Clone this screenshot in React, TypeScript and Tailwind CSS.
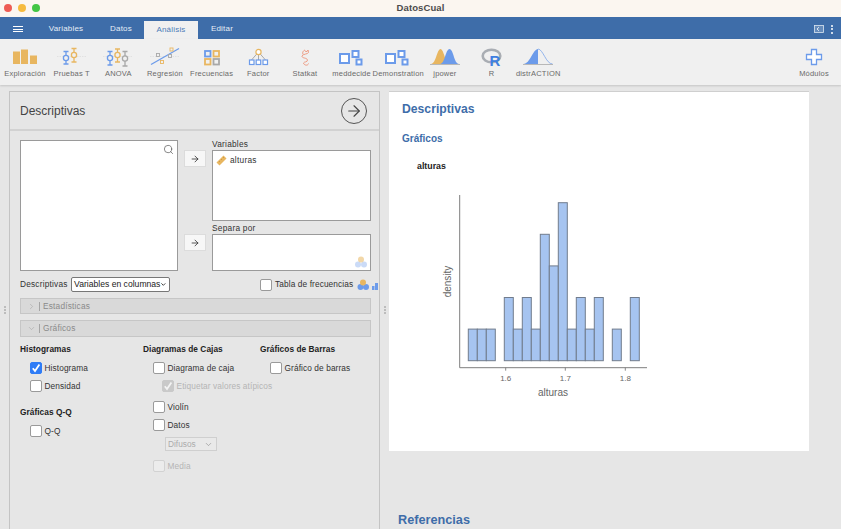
import { ChevronDown, ChevronRight, Search, ArrowRight } from "lucide-react";

const BLUE = "#6c9bea";
const ORANGE = "#e8b660";
const GRAY = "#a8a8a8";

function Whisker({ x, y1, y2, cy, color }: { x: number; y1: number; y2: number; cy: number; color: string }) {
  return (
    <g stroke={color} strokeWidth="1.3" fill="#f0f0f0">
      <path d={`M${x} ${y1}V${y2}M${x - 2.5} ${y1}h5M${x - 2.5} ${y2}h5`} />
      <circle cx={x} cy={cy} r="2.6" />
    </g>
  );
}

function Squares() {
  return (
    <g fill="#fff" stroke={BLUE} strokeWidth="2">
      <rect x="6" y="7" width="9" height="9" />
      <rect x="18.5" y="4" width="6" height="6" />
      <rect x="22.5" y="12.5" width="5" height="5" />
    </g>
  );
}

const tools = [
  {
    label: "Exploración",
    icon: (
      <g fill={ORANGE}>
        <rect x="6" y="4.5" width="7" height="12.5" />
        <rect x="14" y="2.5" width="7" height="14.5" />
        <rect x="23" y="8.5" width="7" height="8.5" />
      </g>
    ),
  },
  {
    label: "Pruebas T",
    icon: (
      <>
        <path d="M3 9.5H32" stroke="#ddd" strokeWidth="0.8" strokeDasharray="1.5 1" />
        <Whisker x={12} y1={4.5} y2={17} cy={11} color={BLUE} />
        <Whisker x={20} y1={1.5} y2={15} cy={8} color={ORANGE} />
      </>
    ),
  },
  {
    label: "ANOVA",
    icon: (
      <>
        <path d="M3 9.5H33" stroke="#ddd" strokeWidth="0.8" strokeDasharray="1.5 1" />
        <Whisker x={10} y1={4.5} y2={18} cy={11} color={BLUE} />
        <Whisker x={17.5} y1={2} y2={15} cy={8} color={ORANGE} />
        <Whisker x={25} y1={4.5} y2={19} cy={11.5} color={GRAY} />
      </>
    ),
  },
  {
    label: "Regresión",
    icon: (
      <>
        <path d="M3 9.5H33" stroke="#ddd" strokeWidth="0.8" strokeDasharray="1.5 1" />
        <path d="M4 17.5L32 1.5" stroke={BLUE} strokeWidth="1.2" />
        <g fill="#f0f0f0" strokeWidth="0.9">
          <rect x="9.5" y="6.5" width="3" height="3" stroke={GRAY} />
          <rect x="23" y="1" width="3" height="3" stroke={ORANGE} />
          <rect x="21.5" y="7.5" width="3" height="3" stroke={GRAY} />
          <rect x="13.5" y="13.5" width="3" height="3" stroke={ORANGE} />
        </g>
      </>
    ),
  },
  {
    label: "Frecuencias",
    icon: (
      <g fill="#f0f0f0" strokeWidth="1.8">
        <rect x="11" y="4" width="5.5" height="5.5" stroke={BLUE} />
        <rect x="19.5" y="4" width="5.5" height="5.5" stroke={ORANGE} />
        <rect x="11" y="12" width="5.5" height="5.5" stroke={ORANGE} />
        <rect x="19.5" y="12" width="5.5" height="5.5" stroke={GRAY} />
      </g>
    ),
  },
  {
    label: "Factor",
    icon: (
      <>
        <path d="M18.5 5L11.5 13M18.5 5V13M18.5 5L25.5 13" stroke="#8a8a8a" strokeWidth="0.7" />
        <circle cx="18.5" cy="5" r="2.6" fill="#fff" stroke={ORANGE} strokeWidth="1.2" />
        <g fill="#fff" stroke={BLUE} strokeWidth="1.2">
          <rect x="9.5" y="13" width="4.5" height="4.5" />
          <rect x="16.2" y="13" width="4.5" height="4.5" />
          <rect x="23" y="13" width="4.5" height="4.5" />
        </g>
      </>
    ),
  },
  {
    label: "Statkat",
    icon: (
      <path
        d="M16 7.5C15 5 16.5 4 17.5 3L18.5 4.5L20 4.5L21 3L21.5 5.5C20.5 7.5 16.5 6.5 15 9C14.5 11.5 20 10.5 20.5 13C20.5 15.5 17 14.5 16.5 16C17 18.5 21 19 21.5 16.5"
        fill="none"
        stroke="#ec9378"
        strokeWidth="0.9"
      />
    ),
  },
  { label: "meddecide", icon: <Squares /> },
  { label: "Demonstration", icon: <Squares /> },
  {
    label: "jpower",
    icon: (
      <>
        <path d="M4 17C9 17 10 2 13.5 2C17 2 18 17 23 17Z" fill={ORANGE} />
        <path d="M13 17C18 17 18.5 2 22.5 2C26.5 2 27 17 32 17Z" fill={BLUE} />
        <path d="M3 17.5H33" stroke="#aaa" strokeWidth="0.8" />
      </>
    ),
  },
  {
    label: "R",
    icon: (
      <>
        <ellipse cx="17.5" cy="9" rx="8.8" ry="6.3" fill="none" stroke="#a9adb3" strokeWidth="2.6" />
        <text x="15.5" y="19" fontFamily="'Liberation Sans', sans-serif" fontWeight="700" fontSize="15" fill="#3f7fe0">
          R
        </text>
      </>
    ),
  },
  {
    label: "distrACTION",
    icon: (
      <>
        <path d="M3.5 17C10 17 13 2 18 2V17Z" fill={BLUE} />
        <path d="M18 2C23 2 26 17 32.5 17" fill="none" stroke={BLUE} strokeWidth="0.7" />
        <path d="M3 17.5H33" stroke="#aaa" strokeWidth="0.8" />
      </>
    ),
  },
];

function Tool({ label, icon }: { label: string; icon: React.ReactNode }) {
  return (
    <div className="flex w-[46.67px] shrink-0 flex-col items-center">
      <svg width="36" height="22" viewBox="0 0 36 22" className="shrink-0 overflow-visible">
        {icon}
      </svg>
      <span className="mt-[-1px] text-[7.5px] leading-[12px] tracking-[0.2px] whitespace-nowrap text-[#6a6a6a]">{label}</span>
    </div>
  );
}

function Check({ checked, disabled }: { checked?: boolean; disabled?: boolean }) {
  let cls = "border-[#9a9a9a] bg-white";
  if (checked) cls = "border-[#2f7cf6] bg-[#2f7cf6]";
  if (disabled) cls = checked ? "border-[#c9c9c9] bg-[#c9c9c9]" : "border-[#d2d2d2] bg-[#ececec]";
  return (
    <span className={`flex h-[12px] w-[12px] shrink-0 items-center justify-center rounded-[2px] border ${cls}`}>
      {checked && (
        <svg width="10" height="10" viewBox="0 0 10 10">
          <path d="M1.8 5.2L4 8L8.4 1.6" fill="none" stroke={disabled ? "#f3f3f3" : "#fff"} strokeWidth="1.8" />
        </svg>
      )}
    </span>
  );
}

function Option({ label, checked, disabled, className = "" }: { label: string; checked?: boolean; disabled?: boolean; className?: string }) {
  return (
    <div className={`flex h-[12px] items-center gap-[2.5px] ${className}`}>
      <Check checked={checked} disabled={disabled} />
      <span className={`text-[8.3px] tracking-[0.1px] whitespace-nowrap ${disabled ? "text-[#b5b5b5]" : "text-[#333]"}`}>{label}</span>
    </div>
  );
}

function Heading({ children, className = "" }: { children: React.ReactNode; className?: string }) {
  return <div className={`text-[8.3px] leading-[12px] font-bold tracking-[0.05px] whitespace-nowrap text-[#222] ${className}`}>{children}</div>;
}

function SectionBar({ label, open, className = "" }: { label: string; open?: boolean; className?: string }) {
  return (
    <div className={`flex h-[16px] w-[351px] items-center border border-[#c6c6c6] bg-[#d9d9d9] pl-[6px] text-[8.3px] tracking-[0.2px] text-[#8a8a8a] ${className}`}>
      {open ? <ChevronDown size={9} strokeWidth={1} /> : <ChevronRight size={9} strokeWidth={1} />}
      <span className="mr-[3px] ml-[3px] h-[9px] w-px bg-[#a5a5a5]" />
      {label}
    </div>
  );
}

function AssignButton({ className = "" }: { className?: string }) {
  return (
    <div className={`flex h-[17px] w-[22px] items-center justify-center border border-[#dcdcdc] bg-[#f7f7f7] ${className}`}>
      <ArrowRight size={10} strokeWidth={1.8} className="text-[#222]" />
    </div>
  );
}

function NominalIcon({ className = "" }: { className?: string }) {
  return (
    <svg width="14" height="12" viewBox="0 0 14 12" className={className}>
      <g fill={BLUE} opacity="0.35">
        <circle cx="4" cy="8.5" r="3" />
        <circle cx="10" cy="8.5" r="3" />
      </g>
      <circle cx="7" cy="3.5" r="3" fill={ORANGE} opacity="0.55" />
    </svg>
  );
}

function Splitter() {
  return (
    <div className="flex flex-col items-center gap-[1px]">
      <span className="h-[2px] w-[2px] bg-[#bcbcbc]" />
      <span className="h-[2px] w-[2px] bg-[#bcbcbc]" />
      <span className="h-[2px] w-[2px] bg-[#bcbcbc]" />
    </div>
  );
}

const bins = [1, 1, 1, 0, 2, 1, 2, 1, 4, 3, 5, 1, 2, 1, 2, 0, 1, 0, 2];

function Histogram() {
  return (
    <svg width="220" height="212" viewBox="0 0 220 212" className="mt-[19px] ml-[28px] block" fontFamily="'Liberation Sans', sans-serif">
      {bins.map((n, i) =>
        n === 0 ? null : (
          <rect key={i} x={38.3 + i * 9} y={170.7 - n * 31.6} width="9" height={n * 31.6} fill="#a6c4f0" stroke="#717c8d" strokeWidth="1" />
        ),
      )}
      <path d="M29.7 5V177.7H217" fill="none" stroke="#6f6f6f" strokeWidth="0.9" />
      <path d="M75.7 177.7v3M135.3 177.7v3M195.3 177.7v3" stroke="#6f6f6f" strokeWidth="0.8" />
      <g fontSize="8" fill="#666" textAnchor="middle">
        <text x="75.7" y="191">1.6</text>
        <text x="135.3" y="191">1.7</text>
        <text x="195.3" y="191">1.8</text>
      </g>
      <text x="123" y="206" fontSize="10" fill="#666" textAnchor="middle">alturas</text>
      <text x="0" y="0" fontSize="10" fill="#666" textAnchor="middle" transform="translate(20.5 91.5) rotate(-90)">density</text>
    </svg>
  );
}

export default function App() {
  return (
    <div className="flex h-[529px] w-[841px] flex-col overflow-hidden bg-[#e6e6e6] font-['Liberation_Sans',Arial,sans-serif]">
      {/* title bar */}
      <div className="relative flex h-[17px] shrink-0 items-center justify-center bg-[#fbf6f0]">
        <div className="absolute top-[3.5px] left-[3.5px] flex gap-[6px]">
          <span className="h-[8px] w-[8px] rounded-full bg-[#ee5c54]" />
          <span className="h-[8px] w-[8px] rounded-full bg-[#f6bb3e]" />
          <span className="h-[8px] w-[8px] rounded-full bg-[#43c645]" />
        </div>
        <span className="text-[9.5px] font-bold tracking-[0.1px] text-[#4b4b4b]">DatosCual</span>
      </div>

      {/* tabs */}
      <div className="flex h-[22px] shrink-0 items-end bg-[#3e6da9] text-[8px] tracking-[0.2px] text-[#e6edf6]">
        <div className="flex h-full w-[34px] items-center justify-center pl-[1px]">
          <div className="flex flex-col gap-[1.5px] pt-[2px]">
            <span className="h-[1px] w-[10px] bg-white" />
            <span className="h-[1px] w-[10px] bg-white" />
            <span className="h-[1px] w-[10px] bg-white" />
          </div>
        </div>
        <div className="flex h-full w-[64px] items-center justify-center pt-[2px]">Variables</div>
        <div className="flex h-full w-[46px] items-center justify-center pt-[2px]">Datos</div>
        <div className="flex h-[18px] w-[54px] items-center justify-center bg-[#f0f0f0] text-[#4d7db8]">Análisis</div>
        <div className="flex h-full w-[48px] items-center justify-center pt-[2px]">Editar</div>
        <div className="flex h-full flex-1 items-center justify-end gap-[7px] pt-[2px] pr-[8px]">
          <svg width="10" height="8" viewBox="0 0 10 8">
            <rect x="0.5" y="0.5" width="9" height="7" fill="none" stroke="#dce6f2" strokeWidth="0.8" />
            <path d="M0.5 0.5H9.5V7.5H0.5Z" fill="#dce6f2" opacity="0.25" />
            <path d="M5 2.2L3 4L5 5.8" fill="none" stroke="#fff" strokeWidth="0.8" />
          </svg>
          <div className="flex flex-col gap-[1.5px]">
            <span className="h-[2px] w-[2px] rounded-full bg-white" />
            <span className="h-[2px] w-[2px] rounded-full bg-white" />
            <span className="h-[2px] w-[2px] rounded-full bg-white" />
          </div>
        </div>
      </div>

      {/* toolbar */}
      <div className="flex h-[46px] shrink-0 items-start bg-[#f0f0f0] pt-[8px] pl-[1.7px] shadow-[0_1px_2px_rgba(0,0,0,0.15)]">
        {tools.map((t) => (
          <Tool key={t.label} label={t.label} icon={t.icon} />
        ))}
        <div className="ml-auto flex w-[54px] flex-col items-center">
          <svg width="22" height="22" viewBox="0 0 22 22" className="shrink-0">
            <path d="M8.5 2.5H13.5V7.5H18.5V12.5H13.5V17.5H8.5V12.5H3.5V7.5H8.5Z" fill="#fff" stroke={BLUE} strokeWidth="1.3" />
          </svg>
          <span className="mt-[-1px] text-[7.5px] leading-[12px] tracking-[0.2px] text-[#6a6a6a]">Módulos</span>
        </div>
      </div>

      {/* body */}
      <div className="flex min-h-0 flex-1 pt-[6px]">
        <div className="flex w-[9px] shrink-0 items-center justify-center">
          <div className="mt-[-1px]"><Splitter /></div>
        </div>

        {/* options panel */}
        <div className="w-[371px] shrink-0 overflow-hidden border border-b-0 border-[#c4c4c4] bg-[#e6e6e6]">
          <div className="flex h-[39px] items-center justify-between border-b-2 border-[#d2d2d2] pr-[12px] pl-[10px]">
            <span className="text-[12px] text-[#444]">Descriptivas</span>
            <div className="flex h-[26px] w-[26px] items-center justify-center rounded-full border-[1.5px] border-[#555]">
              <ArrowRight size={18} strokeWidth={1.5} className="text-[#444]" />
            </div>
          </div>

          <div className="pt-[9px] pl-[10px]">
            <div className="flex">
              <div className="flex h-[131px] w-[158px] justify-end border border-[#9a9a9a] bg-white pt-[3px] pr-[3px]">
                <Search size={11} strokeWidth={1.5} className="text-[#555]" />
              </div>
              <div className="ml-[6px] w-[22px] pt-[10px]">
                <AssignButton />
                <AssignButton className="mt-[67px]" />
              </div>
              <div className="ml-[6px] w-[159px]">
                <div className="h-[10px] text-[8.3px] leading-[9px] tracking-[0.25px] text-[#333]">Variables</div>
                <div className="flex h-[71px] items-start gap-[3px] border border-[#9a9a9a] bg-white pt-[4px] pl-[3px]">
                  <svg width="11" height="11" viewBox="0 0 11 11" className="shrink-0">
                    <path d="M0.5 7.5L7.5 0.5L10.5 3.5L3.5 10.5Z" fill={ORANGE} />
                    <path d="M3 6L4 7M5 4L6 5M7 2L8 3" stroke="#b98a35" strokeWidth="0.6" />
                  </svg>
                  <span className="text-[8.3px] leading-[10px] tracking-[0.25px] text-[#333]">alturas</span>
                </div>
                <div className="mt-[2px] h-[11px] text-[8.3px] leading-[11px] tracking-[0.25px] text-[#333]">Separa por</div>
                <div className="flex h-[37px] items-end justify-end border border-[#9a9a9a] bg-white pr-[2px] pb-[2px]">
                  <NominalIcon />
                </div>
              </div>
            </div>

            <div className="mt-[6px] flex h-[15px] items-center">
              <span className="shrink-0 text-[8.3px] tracking-[0.2px] text-[#333]">Descriptivas</span>
              <div className="ml-[3.5px] flex h-[15px] w-[99px] shrink-0 items-center justify-between rounded-[2px] border border-[#777] bg-white pr-[2px] pl-[2px] text-[8.6px] whitespace-nowrap text-[#222]">
                Variables en columnas
                <ChevronDown size={9} strokeWidth={3} />
              </div>
              <div className="ml-[90px] flex shrink-0 items-center gap-[3px]">
                <Check />
                <span className="text-[8.3px] tracking-[0.1px] whitespace-nowrap text-[#333]">Tabla de frecuencias</span>
              </div>
              <svg width="22" height="12" viewBox="0 0 22 12" className="ml-[4px] shrink-0">
                <circle cx="3.5" cy="8" r="3" fill={BLUE} />
                <circle cx="9" cy="8" r="3" fill={BLUE} />
                <circle cx="6" cy="3.5" r="3" fill={ORANGE} />
                <path d="M15 7h2.5v4H15ZM18 4h3v7h-3Z" fill={BLUE} />
              </svg>
            </div>

            <SectionBar label="Estadísticas" className="mt-[6px]" />
            <SectionBar label="Gráficos" open className="mt-[6px] h-[17px]" />

            <div className="mt-[6px] grid grid-cols-[123px_117px_1fr]">
              <div>
                <Heading>Histogramas</Heading>
                <Option label="Histograma" checked className="mt-[7px] ml-[10px]" />
                <Option label="Densidad" className="mt-[6px] ml-[10px]" />
                <Heading className="mt-[14px]">Gráficas Q-Q</Heading>
                <Option label="Q-Q" className="mt-[7px] ml-[10px]" />
              </div>
              <div>
                <Heading>Diagramas de Cajas</Heading>
                <Option label="Diagrama de caja" className="mt-[7px] ml-[10px]" />
                <Option label="Etiquetar valores atípicos" checked disabled className="mt-[6px] ml-[19px]" />
                <Option label="Violín" className="mt-[9px] ml-[10px]" />
                <Option label="Datos" className="mt-[6px] ml-[10px]" />
                <div className="mt-[6px] ml-[22px] flex h-[14px] w-[52px] items-center justify-between border border-[#cfcfcf] bg-[#e9e9e9] pr-[3px] pl-[2px] text-[8.3px] text-[#ababab]">
                  Difusos
                  <ChevronDown size={9} strokeWidth={1.6} className="text-[#8a8a8a]" />
                </div>
                <Option label="Media" disabled className="mt-[9px] ml-[10px]" />
              </div>
              <div>
                <Heading>Gráficos de Barras</Heading>
                <Option label="Gráfico de barras" className="mt-[7px] ml-[10px]" />
              </div>
            </div>
          </div>
        </div>

        <div className="flex w-[9px] shrink-0 items-center justify-center">
          <div className="mt-[-1px]"><Splitter /></div>
        </div>

        {/* results */}
        <div className="w-[420px] shrink-0">
          <div className="h-[360px] border-t border-[#cfcfcf] bg-white pt-[10px] pl-[13px]">
            <h1 className="text-[12.2px] leading-[14px] font-bold text-[#3e6da9]">Descriptivas</h1>
            <h2 className="mt-[17px] text-[10px] leading-[12px] font-bold text-[#3e6da9]">Gráficos</h2>
            <div className="mt-[16px] ml-[15px] text-[8.8px] leading-[10px] font-bold text-[#222]">alturas</div>
            <Histogram />
          </div>
          <h2 className="mt-[62px] ml-[9px] text-[12.7px] leading-[14px] font-bold text-[#3e6da9]">Referencias</h2>
        </div>
      </div>
    </div>
  );
}
